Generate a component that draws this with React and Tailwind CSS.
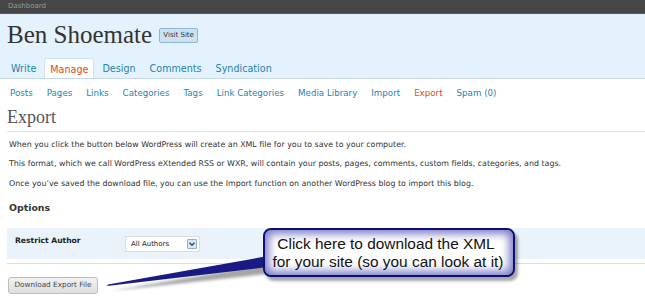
export default function App() {
  const tabs = ["Write", "Manage", "Design", "Comments", "Syndication"];
  const sub = ["Posts", "Pages", "Links", "Categories", "Tags", "Link Categories", "Media Library", "Import", "Export", "Spam (0)"];
  return (
    <div className="relative w-[645px] h-[298px] overflow-hidden bg-white text-[#333] font-['DejaVu_Sans',sans-serif]">
      <div className="h-[14px] bg-[#464646] flex items-center pl-[8px] text-[7px] text-[#999] border-b border-[#5a5a5a]">Dashboard</div>
      <div className="h-[65px] bg-[#e4f2fd] border-b border-[#c6d9e9] flex flex-col">
        <div className="flex items-center pl-[7px] mt-[6px] h-[30px]">
          <span className="font-['Liberation_Serif',serif] text-[25px] leading-[30px] text-[#333]">Ben Shoemate</span>
          <span className="ml-[7px] h-[15px] w-[39px] flex items-center justify-center rounded-[2px] border border-[#8fb8d6] bg-[#cee1ef] text-[7px] text-[#333]">Visit Site</span>
        </div>
        <div className="flex mt-[8px] pl-[5px] gap-[2px] h-[20px]">
          {tabs.map((t) => (
            <div
              key={t}
              className={
                t === "Manage"
                  ? "px-[5px] flex items-center pt-[3px] bg-white rounded-t-[3px] border border-b-0 border-[#d3e4f1] text-[#d54e21] text-[9.6px]"
                  : "px-[5px] flex items-center pt-[3px] text-[#2583ad] text-[9.6px] border border-transparent"
              }
            >
              {t}
            </div>
          ))}
        </div>
      </div>
      <div className="flex pl-[10px] gap-[14px] mt-[8px] h-[13px] items-center text-[8.7px]">
        {sub.map((s) => (
          <span key={s} className={s === "Export" ? "text-[#d54e21]" : "text-[#2583ad]"}>{s}</span>
        ))}
      </div>
      <div className="ml-[7px] mt-[7px] pb-[4px] border-b border-[#e2e2e2]">
        <div className="font-['Liberation_Serif',serif] text-[18px] leading-[20px] text-[#555]">Export</div>
      </div>
      <div className="pl-[9px] text-[7.9px] leading-[10px] text-[#333]">
        <p className="mt-[8px]">When you click the button below WordPress will create an XML file for you to save to your computer.</p>
        <p className="mt-[9px]">This format, which we call WordPress eXtended RSS or WXR, will contain your posts, pages, comments, custom fields, categories, and tags.</p>
        <p className="mt-[10px]">Once you’ve saved the download file, you can use the Import function on another WordPress blog to import this blog.</p>
        <p className="mt-[13px] text-[9.4px] leading-[12px] font-bold text-[#333]">Options</p>
      </div>
      <div className="ml-[7px] mt-[14px] h-[31px] bg-[#eaf3fa] flex items-start">
        <div className="w-[118px] pl-[8px] pt-[8px] text-[7.6px] leading-[10px] font-bold text-[#222]">Restrict Author</div>
        <div className="mt-[8px] w-[75px] h-[16px] border border-[#dcdcdc] bg-white flex items-center justify-between pl-[5px] pr-[2px]">
          <span className="text-[7px] text-[#222]">All Authors</span>
          <span className="w-[10px] h-[10px] rounded-[1px] border border-[#8fb0cd] bg-[#d8e6f2] flex items-center justify-center">
            <svg width="6" height="4" viewBox="0 0 6 4"><polyline points="0.5,0.8 3,3.2 5.5,0.8" fill="none" stroke="#335" strokeWidth="1.2" /></svg>
          </span>
        </div>
      </div>
      <div className="ml-[7px] mt-[4px] h-px bg-[#dedede]"></div>
      <div className="ml-[8px] mt-[13px] w-[90px] h-[17px] rounded-[3px] border border-[#bdbdbd] bg-gradient-to-b from-[#f2f2f2] to-[#dedede] flex items-center justify-center text-[7.3px] text-[#464646]">Download Export File</div>

      <svg className="absolute inset-0 pointer-events-none" width="645" height="298" viewBox="0 0 645 298">
        <defs>
          <filter id="blur" x="-10%" y="-50%" width="120%" height="200%">
            <feGaussianBlur stdDeviation="1.5" />
          </filter>
        </defs>
        <polygon points="110,291 268,264 268,274" fill="#000" opacity="0.35" filter="url(#blur)" />
        <polygon points="107,286 108,284.5 268,256 268,267" fill="#1a1a85" />
      </svg>
      <div className="absolute left-[263px] top-[228px] w-[252px] h-[49px] rounded-[8px] border-2 border-[#0e0e78] bg-white shadow-[inset_0_0_9px_4px_#7e7ec8,3px_4px_3px_rgba(0,0,0,0.35)] flex flex-col items-center justify-center font-['Liberation_Sans',Arial,sans-serif] text-[15.4px] leading-[18px] text-[#111]">
        <div className="pr-[6px]">Click here to download the XML</div>
        <div className="pr-[2px]">for your site (so you can look at it)</div>
      </div>
    </div>
  );
}
